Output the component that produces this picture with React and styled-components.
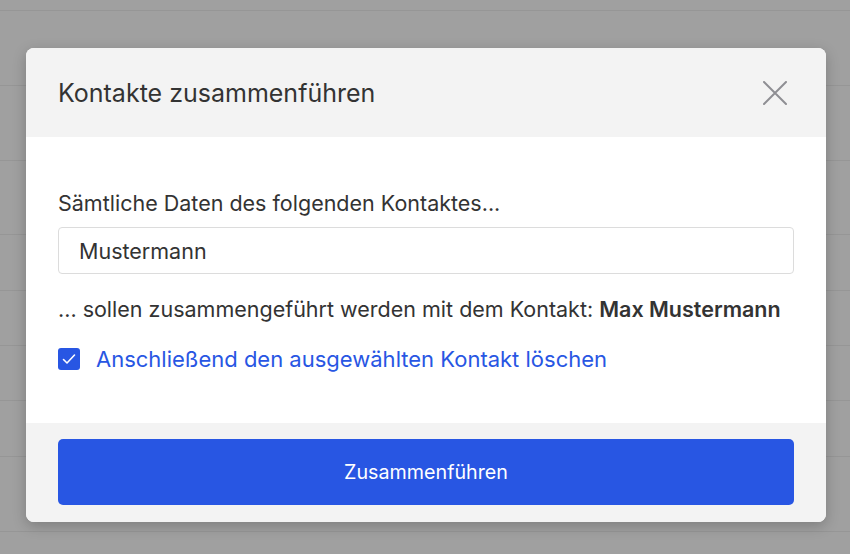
import React from 'react';
import styled, {createGlobalStyle} from 'styled-components';

const GlobalStyle = createGlobalStyle`
    html, body {
        margin: 0;
        padding: 0;
        height: 100%;
    }
    body {
        font-family: Inter, "Noto Sans", sans-serif;
        background: #a0a0a0;
        overflow: hidden;
    }
`;

const Page = styled('div')`
    position: relative;
    width: 850px;
    height: 554px;
    background: #a0a0a0;
`;

const BackgroundRows = styled('div')`
    display: flex;
    flex-direction: column;
    padding-top: 10px;
`;

const BackgroundRow = styled('div')`
    height: ${props => props.$h}px;
    border-top: 1px solid #969696;
    box-sizing: border-box;
`;

const Overlay = styled('div')`
    position: absolute;
    inset: 0;
    display: flex;
    justify-content: center;
    align-items: flex-start;
    padding: 48px 0 0 2px;
`;

const Modal = styled('div')`
    width: 800px;
    border-radius: 8px;
    overflow: hidden;
    background: #fff;
    box-shadow: 0 4px 14px rgba(0, 0, 0, 0.22);
`;

const Header = styled('div')`
    height: 89px;
    background: #f3f3f3;
    display: flex;
    align-items: center;
    justify-content: space-between;
    padding: 0 32px;
    box-sizing: border-box;
`;

const Title = styled('h2')`
    margin: 0;
    font-size: 25px;
    font-weight: 400;
    color: #333;
`;

const CloseButton = styled('button')`
    border: 0;
    background: none;
    padding: 0;
    width: 32px;
    height: 32px;
    display: flex;
    align-items: center;
    justify-content: center;
    margin-right: 3px;
    cursor: pointer;
`;

const Body = styled('div')`
    padding: 54px 32px 0;
    height: 286px;
    box-sizing: border-box;
`;

const Text = styled('p')`
    margin: 0;
    font-size: 21.5px;
    color: #333;
    line-height: 24px;

    strong {
        font-weight: 600;
    }
`;

const Input = styled('input')`
    display: block;
    width: 100%;
    box-sizing: border-box;
    height: 47px;
    margin: 12px 0 23px;
    padding: 0 20px;
    border: 1px solid #dcdcdc;
    border-radius: 4px;
    font-family: inherit;
    font-size: 21.5px;
    color: #333;
    outline: none;
`;

const CheckRow = styled('label')`
    display: flex;
    align-items: center;
    gap: 16px;
    margin-top: 25px;
    cursor: pointer;
`;

const CheckBox = styled('span')`
    width: 22px;
    height: 22px;
    border-radius: 3px;
    background: #2856e3;
    display: flex;
    align-items: center;
    justify-content: center;
    flex-shrink: 0;
`;

const CheckLabel = styled('span')`
    font-size: 22px;
    color: #2856e3;
`;

const Footer = styled('div')`
    background: #f3f3f3;
    padding: 16px 32px 17px;
`;

const PrimaryButton = styled('button')`
    width: 100%;
    height: 66px;
    border: 0;
    border-radius: 5px;
    background: #2856e3;
    color: #fff;
    font-family: inherit;
    font-size: 19.7px;
    cursor: pointer;
`;

const rows = [75, 75, 74, 56, 55, 55, 56, 75, 40];

const App = () => {
    return (
        <>
            <GlobalStyle/>
            <Page>
                <BackgroundRows>
                    {rows.map((h, i) => <BackgroundRow key={i} $h={h}/>)}
                </BackgroundRows>
                <Overlay>
                    <Modal>
                        <Header>
                            <Title>Kontakte zusammenführen</Title>
                            <CloseButton aria-label="Schließen">
                                <svg width="24" height="24" viewBox="0 0 24 24">
                                    <path d="M1 1L23 23M23 1L1 23" stroke="#8e8e93" strokeWidth="2" strokeLinecap="round"/>
                                </svg>
                            </CloseButton>
                        </Header>
                        <Body>
                            <Text>Sämtliche Daten des folgenden Kontaktes...</Text>
                            <Input defaultValue="Mustermann"/>
                            <Text>... sollen zusammengeführt werden mit dem Kontakt: <strong>Max Mustermann</strong></Text>
                            <CheckRow>
                                <CheckBox>
                                    <svg width="14" height="12" viewBox="0 0 14 12">
                                        <path d="M1.5 6.5L5 10L12.5 2" fill="none" stroke="#fff" strokeWidth="1.6" strokeLinecap="round" strokeLinejoin="round"/>
                                    </svg>
                                </CheckBox>
                                <CheckLabel>Anschließend den ausgewählten Kontakt löschen</CheckLabel>
                            </CheckRow>
                        </Body>
                        <Footer>
                            <PrimaryButton>Zusammenführen</PrimaryButton>
                        </Footer>
                    </Modal>
                </Overlay>
            </Page>
        </>
    );
};

export default App;
